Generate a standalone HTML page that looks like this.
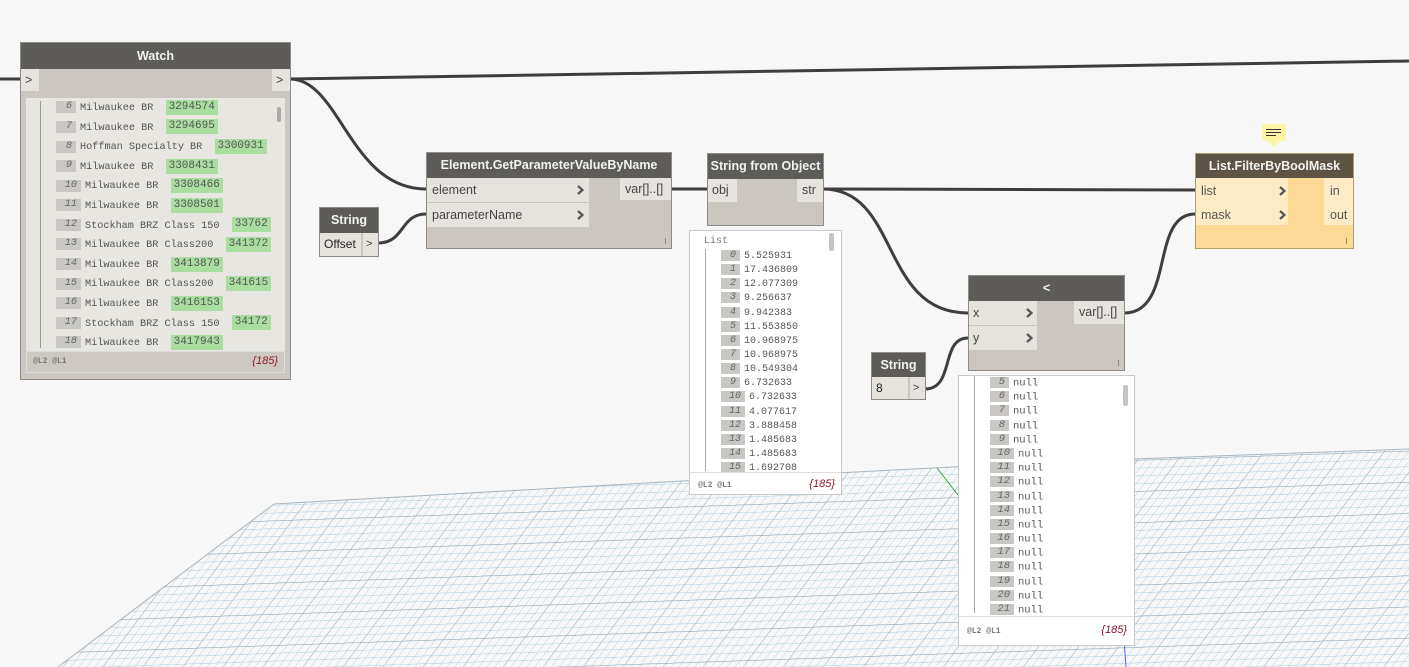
<!DOCTYPE html>
<html><head><meta charset="utf-8">
<style>
*{margin:0;padding:0;box-sizing:border-box}
body{width:1409px;height:667px;overflow:hidden;background:#f7f7f7;position:relative;font-family:"Liberation Sans",sans-serif}
.a{position:absolute}
.node{position:absolute;background:#cbc7c0;border:1px solid #8e8b86}
.hd{position:absolute;left:0;right:0;top:0;background:#5e5c58;color:#f2f2f2;font-weight:bold;font-size:12.5px;text-align:center}
.row{position:absolute;background:#e6e3de;color:#444;font-size:12.5px}
.chev{position:absolute;width:7px;height:10px}
.mono{font-family:"Liberation Mono",monospace;font-size:10.5px;color:#555}
.idx{display:inline-block;background:#c9c7c4;color:#666;font-style:italic;text-align:right;padding-right:4px;margin-right:4px;height:11px;line-height:11px;vertical-align:middle}
.prev{position:absolute;background:#fff;border:1px solid #c8c8c8}
.ft{position:absolute;font-family:"Liberation Mono",monospace;font-size:8px;color:#777;font-weight:bold}
.cnt{position:absolute;font-style:italic;color:#8a1a2a;font-size:11px}
.g{display:inline-block;background:#a9dea0;padding:0 3px;color:#555;height:15px;line-height:15px;vertical-align:middle;font-size:11px}
.w .idx{height:12px;line-height:12px}
</style></head><body>
<svg width="0" height="0" style="position:absolute"><defs><symbol id="cv" viewBox="0 0 7 10"><path d="M1 1 L5.5 5 L1 9" stroke="#555" stroke-width="2.2" fill="none"/></symbol></defs></svg>
<svg class="a" style="left:0;top:0" width="1409" height="667">
<defs>
<pattern id="p" width="8" height="8" patternUnits="userSpaceOnUse" patternTransform="skewX(-38) rotate(-2)">
<path d="M0 0H8M0 0V8" stroke="#a9cbe0" stroke-width="1" fill="none"/>
</pattern>
<pattern id="p2" width="40" height="32" patternUnits="userSpaceOnUse" patternTransform="skewX(-38) rotate(-2)">
<path d="M0 0H40M0 0V32" stroke="#95a6b2" stroke-width="1" fill="none"/>
</pattern>
</defs>
<polygon points="274,504 700,480 1050,462 1409,449 1409,667 58,667" fill="url(#p)"/>
<polygon points="274,504 700,480 1050,462 1409,449 1409,667 58,667" fill="url(#p2)"/>
<polyline points="274,504 700,480 1050,462 1409,449" stroke="#a8b6c0" fill="none"/>
<line x1="274" y1="504" x2="58" y2="667" stroke="#a8b6c0"/>
<line x1="1124" y1="640" x2="1126" y2="667" stroke="#6060ff" stroke-width="1"/>
<line x1="937" y1="468" x2="958" y2="495" stroke="#40a040" stroke-width="1"/>
<g stroke="#3e3e3e" stroke-width="3" fill="none">
<path d="M0 79 H20"/>
<path d="M290 79 L1409 61"/>
<path d="M290 79 C340 79 350 189 426 189"/>
<path d="M378 243 C405 243 400 214 426 214"/>
<path d="M671 189 H707"/>
<path d="M823 189 C900 189 1000 189 1195 190"/>
<path d="M823 189 C900 189 880 313 968 313"/>
<path d="M925 389 C955 389 940 338 968 338"/>
<path d="M1124 313 C1175 313 1150 214 1195 214"/>
</g>
</svg>

<!-- Watch -->
<div class="node" style="left:20px;top:42px;width:271px;height:338px">
<div class="hd" style="height:26px;line-height:26px">Watch</div>
<div class="row" style="left:0;top:26px;width:18px;height:22px;line-height:22px;padding-left:4px">&gt;</div>
<div class="row" style="right:0;top:26px;width:18px;height:22px;line-height:22px;padding-left:4px">&gt;</div>
<div class="a" style="left:5px;top:55px;width:259px;height:253px;background:#e8e6e1;overflow:hidden">
<div class="a" style="left:14px;top:3px;width:1px;height:247px;background:#999"></div>
<div class="a" style="left:251px;top:9px;width:4px;height:15px;background:#aaa;border-radius:2px"></div>
<div class="a mono w" style="left:30px;top:1px;line-height:19.6px;white-space:nowrap;font-size:10.2px">
<div><span class="idx" style="width:20px">6</span>Milwaukee BR &nbsp;<span class="g">3294574</span></div>
<div><span class="idx" style="width:20px">7</span>Milwaukee BR &nbsp;<span class="g">3294695</span></div>
<div><span class="idx" style="width:20px">8</span>Hoffman Specialty BR &nbsp;<span class="g">3300931</span></div>
<div><span class="idx" style="width:20px">9</span>Milwaukee BR &nbsp;<span class="g">3308431</span></div>
<div><span class="idx" style="width:25px">10</span>Milwaukee BR &nbsp;<span class="g">3308466</span></div>
<div><span class="idx" style="width:25px">11</span>Milwaukee BR &nbsp;<span class="g">3308501</span></div>
<div><span class="idx" style="width:25px">12</span>Stockham BRZ Class 150 &nbsp;<span class="g">33762</span></div>
<div><span class="idx" style="width:25px">13</span>Milwaukee BR Class200 &nbsp;<span class="g">341372</span></div>
<div><span class="idx" style="width:25px">14</span>Milwaukee BR &nbsp;<span class="g">3413879</span></div>
<div><span class="idx" style="width:25px">15</span>Milwaukee BR Class200 &nbsp;<span class="g">341615</span></div>
<div><span class="idx" style="width:25px">16</span>Milwaukee BR &nbsp;<span class="g">3416153</span></div>
<div><span class="idx" style="width:25px">17</span>Stockham BRZ Class 150 &nbsp;<span class="g">34172</span></div>
<div><span class="idx" style="width:25px">18</span>Milwaukee BR &nbsp;<span class="g">3417943</span></div>
</div></div>
<div class="a" style="left:5px;top:308px;width:259px;height:22px;border:1px solid #ddd;background:#cdc9c2"></div>
<div class="ft" style="left:12px;top:314px">@L2 @L1</div>
<div class="cnt" style="right:12px;top:312px">{185}</div>
</div>

<!-- String Offset -->
<div class="node" style="left:319px;top:207px;width:60px;height:50px">
<div class="hd" style="height:25px;line-height:25px">String</div>
<div class="row" style="left:0;top:25px;width:41px;height:23px;line-height:23px;padding-left:4px;color:#222;font-size:12px">Offset</div>
<div class="row" style="left:43px;top:25px;width:15px;height:23px;line-height:23px;padding-left:3px;font-size:11px">&gt;</div>
</div>

<!-- Element.GetParameterValueByName -->
<div class="node" style="left:426px;top:152px;width:246px;height:97px">
<div class="hd" style="height:25px;line-height:25px">Element.GetParameterValueByName</div>
<div class="row" style="left:0;top:25px;width:162px;height:24px;line-height:24px;padding-left:5px">element<svg class="chev" style="right:5px;top:7px"><use href="#cv"/></svg></div>
<div class="row" style="left:0;top:50px;width:162px;height:24px;line-height:24px;padding-left:5px">parameterName<svg class="chev" style="right:5px;top:7px"><use href="#cv"/></svg></div>
<div class="row" style="right:0;top:25px;width:51px;height:22px;line-height:22px;padding-left:5px">var[]..[]</div>
<div class="a" style="right:5px;bottom:4px;width:1px;height:6px;background:#888"></div>
</div>

<!-- String from Object -->
<div class="node" style="left:707px;top:153px;width:117px;height:73px">
<div class="hd" style="height:25px;line-height:25px">String from Object</div>
<div class="row" style="left:0;top:25px;width:29px;height:23px;line-height:23px;padding-left:4px">obj</div>
<div class="row" style="right:0;top:25px;width:26px;height:23px;line-height:23px;padding-left:5px">str</div>
</div>

<!-- preview numbers -->
<div class="prev" style="left:689px;top:230px;width:153px;height:265px">
<div class="a" style="left:139px;top:2px;width:5px;height:18px;background:#c4c4c4;border-radius:2px"></div>
<div class="a mono" style="left:14px;top:5px;font-size:10px;color:#777">List</div>
<div class="a" style="left:15px;top:18px;width:1px;height:222px;background:#aaa"></div>
<div class="a mono" style="left:31px;top:19px;line-height:14px;font-size:10px;white-space:nowrap">
<div><span class="idx" style="width:19px">0</span>5.525931</div>
<div><span class="idx" style="width:19px">1</span>17.436809</div>
<div><span class="idx" style="width:19px">2</span>12.077309</div>
<div><span class="idx" style="width:19px">3</span>9.256637</div>
<div><span class="idx" style="width:19px">4</span>9.942383</div>
<div><span class="idx" style="width:19px">5</span>11.553850</div>
<div><span class="idx" style="width:19px">6</span>10.968975</div>
<div><span class="idx" style="width:19px">7</span>10.968975</div>
<div><span class="idx" style="width:19px">8</span>10.549304</div>
<div><span class="idx" style="width:19px">9</span>6.732633</div>
<div><span class="idx" style="width:24px">10</span>6.732633</div>
<div><span class="idx" style="width:24px">11</span>4.077617</div>
<div><span class="idx" style="width:24px">12</span>3.888458</div>
<div><span class="idx" style="width:24px">13</span>1.485683</div>
<div><span class="idx" style="width:24px">14</span>1.485683</div>
<div><span class="idx" style="width:24px">15</span>1.692708</div>
</div>
<div class="a" style="left:0;right:0;top:241px;height:1px;background:#ddd"></div>
<div class="ft" style="left:8px;top:250px">@L2 @L1</div>
<div class="cnt" style="right:6px;top:247px">{185}</div>
</div>

<!-- < node -->
<div class="node" style="left:968px;top:275px;width:157px;height:96px">
<div class="hd" style="height:25px;line-height:25px">&lt;</div>
<div class="row" style="left:0;top:25px;width:68px;height:24px;line-height:24px;padding-left:4px">x<svg class="chev" style="right:4px;top:7px"><use href="#cv"/></svg></div>
<div class="row" style="left:0;top:50px;width:68px;height:24px;line-height:24px;padding-left:4px">y<svg class="chev" style="right:4px;top:7px"><use href="#cv"/></svg></div>
<div class="row" style="right:0;top:25px;width:50px;height:23px;line-height:23px;padding-left:5px">var[]..[]</div>
<div class="a" style="right:5px;bottom:4px;width:1px;height:6px;background:#888"></div>
</div>

<!-- String 8 -->
<div class="node" style="left:871px;top:352px;width:55px;height:48px">
<div class="hd" style="height:24px;line-height:24px">String</div>
<div class="row" style="left:0;top:24px;width:36px;height:22px;line-height:22px;padding-left:4px;color:#222;font-size:12px">8</div>
<div class="row" style="left:38px;top:24px;width:15px;height:22px;line-height:22px;padding-left:3px;font-size:11px">&gt;</div>
</div>

<!-- null preview -->
<div class="prev" style="left:958px;top:375px;width:177px;height:271px">
<div class="a" style="left:164px;top:9px;width:5px;height:21px;background:#c4c4c4;border-radius:2px"></div>
<div class="a" style="left:15px;top:0;width:1px;height:237px;background:#aaa"></div>
<div class="a mono" style="left:31px;top:1px;line-height:13.9px;font-size:10.5px;white-space:nowrap">
<div><span class="idx" style="width:19px">5</span>null</div>
<div><span class="idx" style="width:19px">6</span>null</div>
<div><span class="idx" style="width:19px">7</span>null</div>
<div><span class="idx" style="width:19px">8</span>null</div>
<div><span class="idx" style="width:19px">9</span>null</div>
<div><span class="idx" style="width:24px">10</span>null</div>
<div><span class="idx" style="width:24px">11</span>null</div>
<div><span class="idx" style="width:24px">12</span>null</div>
<div><span class="idx" style="width:24px">13</span>null</div>
<div><span class="idx" style="width:24px">14</span>null</div>
<div><span class="idx" style="width:24px">15</span>null</div>
<div><span class="idx" style="width:24px">16</span>null</div>
<div><span class="idx" style="width:24px">17</span>null</div>
<div><span class="idx" style="width:24px">18</span>null</div>
<div><span class="idx" style="width:24px">19</span>null</div>
<div><span class="idx" style="width:24px">20</span>null</div>
<div><span class="idx" style="width:24px">21</span>null</div>
</div>
<div class="a" style="left:0;right:0;top:240px;height:1px;background:#ddd"></div>
<div class="ft" style="left:8px;top:251px">@L2 @L1</div>
<div class="cnt" style="right:7px;top:248px">{185}</div>
</div>

<!-- note icon -->
<div class="a" style="left:1262px;top:124px;width:24px;height:17px;background:#fdf5a6"></div>
<div class="a" style="left:1268px;top:141px;width:0;height:0;border-left:6px solid transparent;border-right:6px solid transparent;border-top:6px solid #fdf5a6"></div>
<div class="a" style="left:1266px;top:129px;width:15px;height:1px;background:#333"></div>
<div class="a" style="left:1266px;top:132px;width:15px;height:1px;background:#333"></div>
<div class="a" style="left:1266px;top:135px;width:10px;height:1px;background:#333"></div>

<!-- List.FilterByBoolMask -->
<div class="node" style="left:1195px;top:153px;width:159px;height:96px;background:#fcd994;border-color:#b49b6a">
<div class="hd" style="height:24px;line-height:24px;background:#5d5446">List.FilterByBoolMask</div>
<div class="row" style="left:0;top:24px;width:92px;height:47px;background:#fdebc6"></div>
<div class="a" style="left:5px;top:30px;font-size:12.5px;color:#555">list</div>
<svg class="chev" style="left:83px;top:32px"><use href="#cv"/></svg>
<div class="a" style="left:5px;top:54px;font-size:12.5px;color:#555">mask</div>
<svg class="chev" style="left:83px;top:56px"><use href="#cv"/></svg>
<div class="row" style="right:0;top:24px;width:29px;height:47px;background:#fdebc6"></div>
<div class="a" style="left:134px;top:30px;font-size:12.5px;color:#555">in</div>
<div class="a" style="left:134px;top:54px;font-size:12.5px;color:#555">out</div>
<div class="a" style="right:6px;bottom:4px;width:1px;height:6px;background:#a08a60"></div>
</div>
</body></html>
